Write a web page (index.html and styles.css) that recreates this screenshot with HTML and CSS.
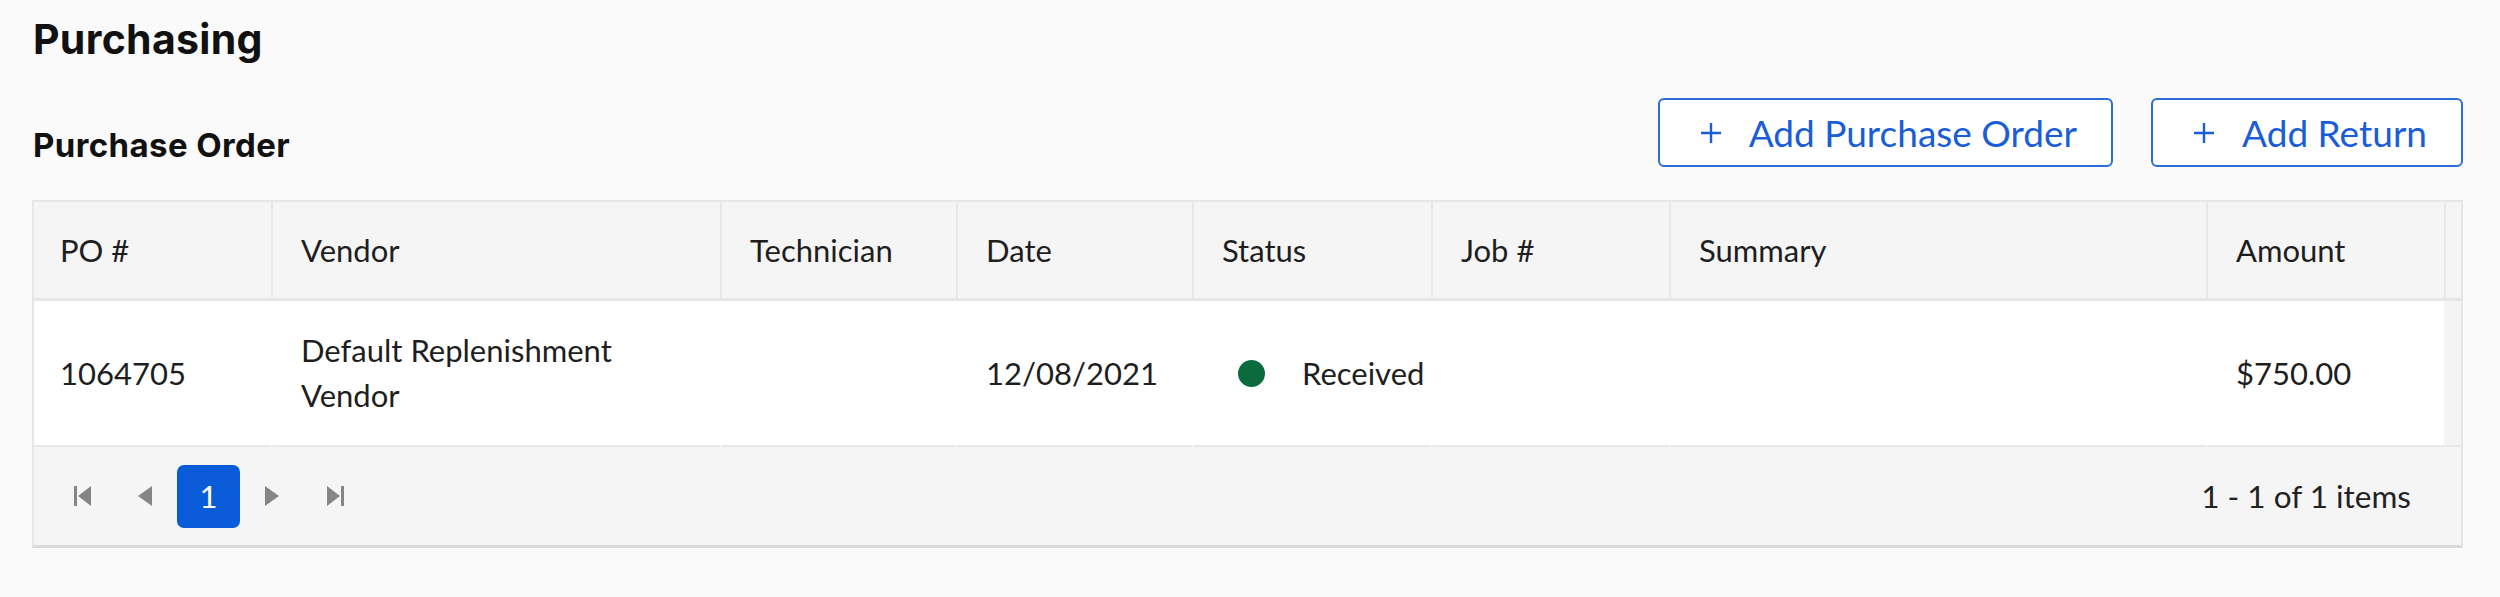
FILE: index.html
```html
<!DOCTYPE html>
<html>
<head>
<meta charset="utf-8">
<link rel="stylesheet" href="styles.css">
</head>
<body>
<div class="page">
  <h1 class="title">Purchasing</h1>
  <div class="section-head">
    <h2 class="subtitle">Purchase Order</h2>
    <div class="actions">
      <button class="btn"><svg class="plus" width="22" height="22" viewBox="0 0 22 22"><path d="M11 1V21M1 11H21" stroke="currentColor" stroke-width="2.4" fill="none"/></svg><span>Add Purchase Order</span></button>
      <button class="btn"><svg class="plus" width="22" height="22" viewBox="0 0 22 22"><path d="M11 1V21M1 11H21" stroke="currentColor" stroke-width="2.4" fill="none"/></svg><span>Add Return</span></button>
    </div>
  </div>
  <div class="grid">
    <table class="tbl">
      <colgroup>
        <col class="c-po"><col class="c-vendor"><col class="c-tech"><col class="c-date"><col class="c-status"><col class="c-job"><col class="c-summary"><col class="c-amount"><col class="c-gutter">
      </colgroup>
      <thead>
        <tr>
          <th class="first">PO #</th>
          <th>Vendor</th>
          <th>Technician</th>
          <th>Date</th>
          <th>Status</th>
          <th>Job #</th>
          <th>Summary</th>
          <th>Amount</th>
          <th class="gutter"></th>
        </tr>
      </thead>
      <tbody>
        <tr>
          <td class="first">1064705</td>
          <td><div class="wrap">Default Replenishment<br>Vendor</div></td>
          <td></td>
          <td>12/08/2021</td>
          <td><div class="status"><span class="dot"></span><span>Received</span></div></td>
          <td></td>
          <td></td>
          <td>$750.00</td>
          <td class="gutter"></td>
        </tr>
      </tbody>
    </table>
    <div class="pager">
      <div class="nav">
        <span class="pg-item"><svg width="18" height="20" viewBox="0 0 18 20"><rect x="0" y="0" width="3" height="20" fill="#858585"/><path d="M17 0V20L4 10Z" fill="#858585"/></svg></span>
        <span class="pg-item"><svg width="15" height="20" viewBox="0 0 15 20"><path d="M14 0V20L0 10Z" fill="#858585"/></svg></span>
        <span class="pg-item"><span class="pg-num">1</span></span>
        <span class="pg-item"><svg width="15" height="20" viewBox="0 0 15 20"><path d="M1 0V20L15 10Z" fill="#858585"/></svg></span>
        <span class="pg-item"><svg width="18" height="20" viewBox="0 0 18 20"><path d="M1 0V20L14 10Z" fill="#858585"/><rect x="15" y="0" width="3" height="20" fill="#858585"/></svg></span>
      </div>
      <div class="info">1 - 1 of 1 items</div>
    </div>
  </div>
</div>
</body>
</html>
```

FILE: styles.css
```css
html, body {
  margin: 0;
  padding: 0;
  background: #fafafa;
}
.page {
  padding: 0 37px 0 32px;
  font-family: Lato, "Liberation Sans", sans-serif;
  color: #1e1e1e;
}
.title {
  margin: 19px 0 0 1px;
  font-family: Inter, "Liberation Sans", sans-serif;
  font-weight: 700;
  font-size: 41px;
  line-height: 41px;
  color: #111;
  letter-spacing: 0.3px;
}
.section-head {
  margin-top: 38px;
  display: flex;
  justify-content: space-between;
  align-items: flex-end;
}
.subtitle {
  margin: 0 0 5px 1px;
  font-family: Inter, "Liberation Sans", sans-serif;
  font-weight: 700;
  font-size: 33px;
  line-height: 33px;
  color: #111;
  letter-spacing: 0.4px;
}
.actions {
  display: flex;
  gap: 38px;
}
.btn {
  height: 69px;
  box-sizing: border-box;
  display: flex;
  align-items: center;
  gap: 27px;
  padding: 0 34px 0 40px;
  border: 2px solid #2c6bdb;
  border-radius: 6px;
  background: #fff;
  color: #1a5dd6;
  font-family: Lato, "Liberation Sans", sans-serif;
  font-size: 37px;
  font-weight: 400;
  cursor: pointer;
}
.plus {
  display: block;
  flex: none;
}
.grid {
  margin-top: 33px;
  border: 2px solid #e6e6e6;
  border-bottom: 3px solid #dadada;
  background: #fff;
}
.tbl {
  width: 100%;
  table-layout: fixed;
  border-collapse: separate;
  border-spacing: 0;
  font-size: 31px;
}
.c-po { width: 237px; }
.c-vendor { width: 449px; }
.c-tech { width: 236px; }
.c-date { width: 236px; }
.c-status { width: 239px; }
.c-job { width: 238px; }
.c-summary { width: 537px; }
.c-amount { width: 238px; }
.c-gutter { width: 17px; }
.tbl th {
  box-sizing: border-box;
  height: 99px;
  background: #f5f5f5;
  border-bottom: 3px solid #e6e6e6;
  border-left: 2px solid #e8e8e8;
  padding: 0 0 0 28px;
  text-align: left;
  font-weight: 400;
  vertical-align: middle;
  white-space: nowrap;
}
.tbl th.first, .tbl td.first {
  border-left: none;
  padding-left: 26px;
}
.tbl th.gutter {
  padding: 0;
}
.tbl td {
  box-sizing: border-box;
  height: 146px;
  padding: 0 0 0 28px;
  border-left: 2px solid transparent;
  border-bottom: 2px solid #e8e8e8;
  vertical-align: middle;
}
.tbl td.gutter {
  background: #f4f4f4;
  padding: 0;
}
.wrap {
  line-height: 45px;
}
.status {
  display: flex;
  align-items: center;
  gap: 37px;
  padding-left: 16px;
}
.dot {
  width: 27px;
  height: 27px;
  border-radius: 50%;
  background: #0b6b3c;
  flex: none;
}
.pager {
  height: 98px;
  background: #f5f5f5;
  display: flex;
  align-items: center;
  justify-content: space-between;
  padding: 0 50px 0 17px;
}
.nav {
  display: flex;
  align-items: center;
}
.pg-item {
  width: 63px;
  height: 63px;
  display: flex;
  align-items: center;
  justify-content: center;
}
.pg-num {
  width: 63px;
  height: 63px;
  border-radius: 7px;
  background: #0a5bd8;
  color: #fff;
  display: flex;
  align-items: center;
  justify-content: center;
  font-size: 31px;
}
.info {
  font-size: 31.5px;
  color: #222;
}
```
